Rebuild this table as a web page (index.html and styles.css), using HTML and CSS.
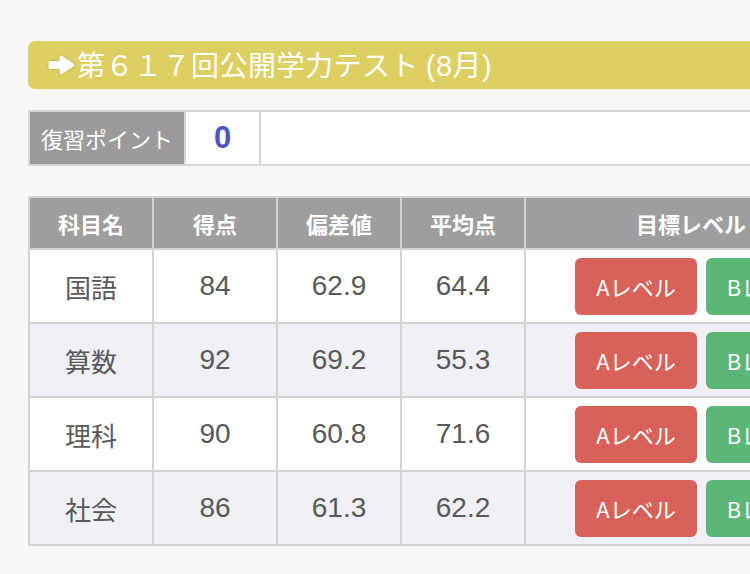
FILE: index.html
```html
<!DOCTYPE html>
<html lang="ja">
<head>
<meta charset="utf-8">
<link rel="stylesheet" href="styles.css">
</head>
<body>
<div class="page">
  <h2 class="title">
    <svg class="arrow" width="29" height="24" viewBox="0 0 29 24" aria-hidden="true">
      <path d="M3 9.5 H14 V4 L26 12 L14 20 V14.5 H3 Z" fill="#fff" stroke="#fff" stroke-width="3" stroke-linejoin="round"/>
    </svg>
    <span>第６１７回公開学力テスト <span class="latin">(8月)</span></span>
  </h2>

  <table class="points">
    <tr>
      <th class="p-label">復習ポイント</th>
      <td class="p-value">0</td>
      <td class="p-rest"></td>
    </tr>
  </table>

  <table class="scores">
    <thead>
      <tr>
        <th class="c">科目名</th>
        <th class="c">得点</th>
        <th class="c">偏差値</th>
        <th class="c">平均点</th>
        <th class="goal">目標レベル</th>
      </tr>
    </thead>
    <tbody>
      <tr>
        <td>国語</td><td class="n">84</td><td class="n">62.9</td><td class="n">64.4</td>
        <td class="btns"><span class="btn red">Aレベル</span><span class="btn green">Bレベル</span></td>
      </tr>
      <tr class="alt">
        <td>算数</td><td class="n">92</td><td class="n">69.2</td><td class="n">55.3</td>
        <td class="btns"><span class="btn red">Aレベル</span><span class="btn green">Bレベル</span></td>
      </tr>
      <tr>
        <td>理科</td><td class="n">90</td><td class="n">60.8</td><td class="n">71.6</td>
        <td class="btns"><span class="btn red">Aレベル</span><span class="btn green">Bレベル</span></td>
      </tr>
      <tr class="alt">
        <td>社会</td><td class="n">86</td><td class="n">61.3</td><td class="n">62.2</td>
        <td class="btns"><span class="btn red">Aレベル</span><span class="btn green">Bレベル</span></td>
      </tr>
    </tbody>
  </table>
</div>
</body>
</html>
```

FILE: styles.css
```css
html, body {
  margin: 0;
  padding: 0;
  background: #f7f7f7;
  overflow: hidden;
}
body {
  font-family: "Liberation Sans", "Noto Sans CJK JP", sans-serif;
  color: #595959;
}
.page {
  width: 1100px;
  padding: 41px 0 0 28px;
}
.title {
  display: flex;
  align-items: center;
  gap: 1px;
  margin: 0;
  height: 48px;
  padding-left: 19px;
  background: #ddcf62;
  border-radius: 7px 0 0 7px;
  color: #fff;
  font-family: "Noto Sans CJK JP", sans-serif;
  font-weight: 400;
  font-size: 28px;
  letter-spacing: 0.5px;
}
.title span {
  line-height: 48px;
}
.title .latin {
  font-family: "Liberation Sans", "Noto Sans CJK JP", sans-serif;
  font-size: 29px;
  letter-spacing: 0.5px;
}
.arrow {
  filter: drop-shadow(0 0 1px rgba(120,110,40,0.5));
}
.points {
  margin-top: 21px;
  border-collapse: collapse;
  width: 1000px;
  height: 56px;
}
.points th, .points td {
  border: 2px solid #d6d6d6;
  padding: 0;
}
.p-label {
  width: 154px;
  background: #9b9b9b;
  color: #fff;
  font-family: "Noto Sans CJK JP", sans-serif;
  font-weight: 400;
  font-size: 22px;
  text-align: center;
}
.p-value {
  width: 73px;
  background: #fff;
  color: #4a57c0;
  font-weight: 700;
  font-size: 31px;
  text-align: center;
}
.p-rest {
  background: #fff;
}
.scores {
  margin-top: 30px;
  border-collapse: collapse;
  width: 1000px;
  table-layout: fixed;
}
.scores th, .scores td {
  border: 2px solid #d3d3d3;
  text-align: center;
  padding: 0;
}
.scores th {
  background: #9e9e9e;
  color: #fff;
  font-family: "Noto Sans CJK JP", sans-serif;
  font-weight: 700;
  font-size: 22px;
  height: 50px;
}
.scores th.c {
  width: 122px;
}
.scores th.goal {
  text-align: left;
  padding-left: 110px;
}
.scores td {
  background: #fff;
  font-size: 26px;
  height: 72px;
}
.scores td.n {
  font-size: 28px;
}
.scores tr.alt td {
  background: #efeff5;
}
.scores td.btns {
  text-align: left;
  padding-left: 49px;
  white-space: nowrap;
}
.btn {
  display: inline-flex;
  align-items: center;
  justify-content: center;
  width: 122px;
  height: 57px;
  margin-right: 9px;
  border-radius: 6px;
  color: #fff;
  font-family: "Noto Sans CJK JP", sans-serif;
  font-size: 22px;
  vertical-align: middle;
}
.btn.red {
  background: #d8625a;
}
.btn.green {
  background: #5cb777;
}
```
